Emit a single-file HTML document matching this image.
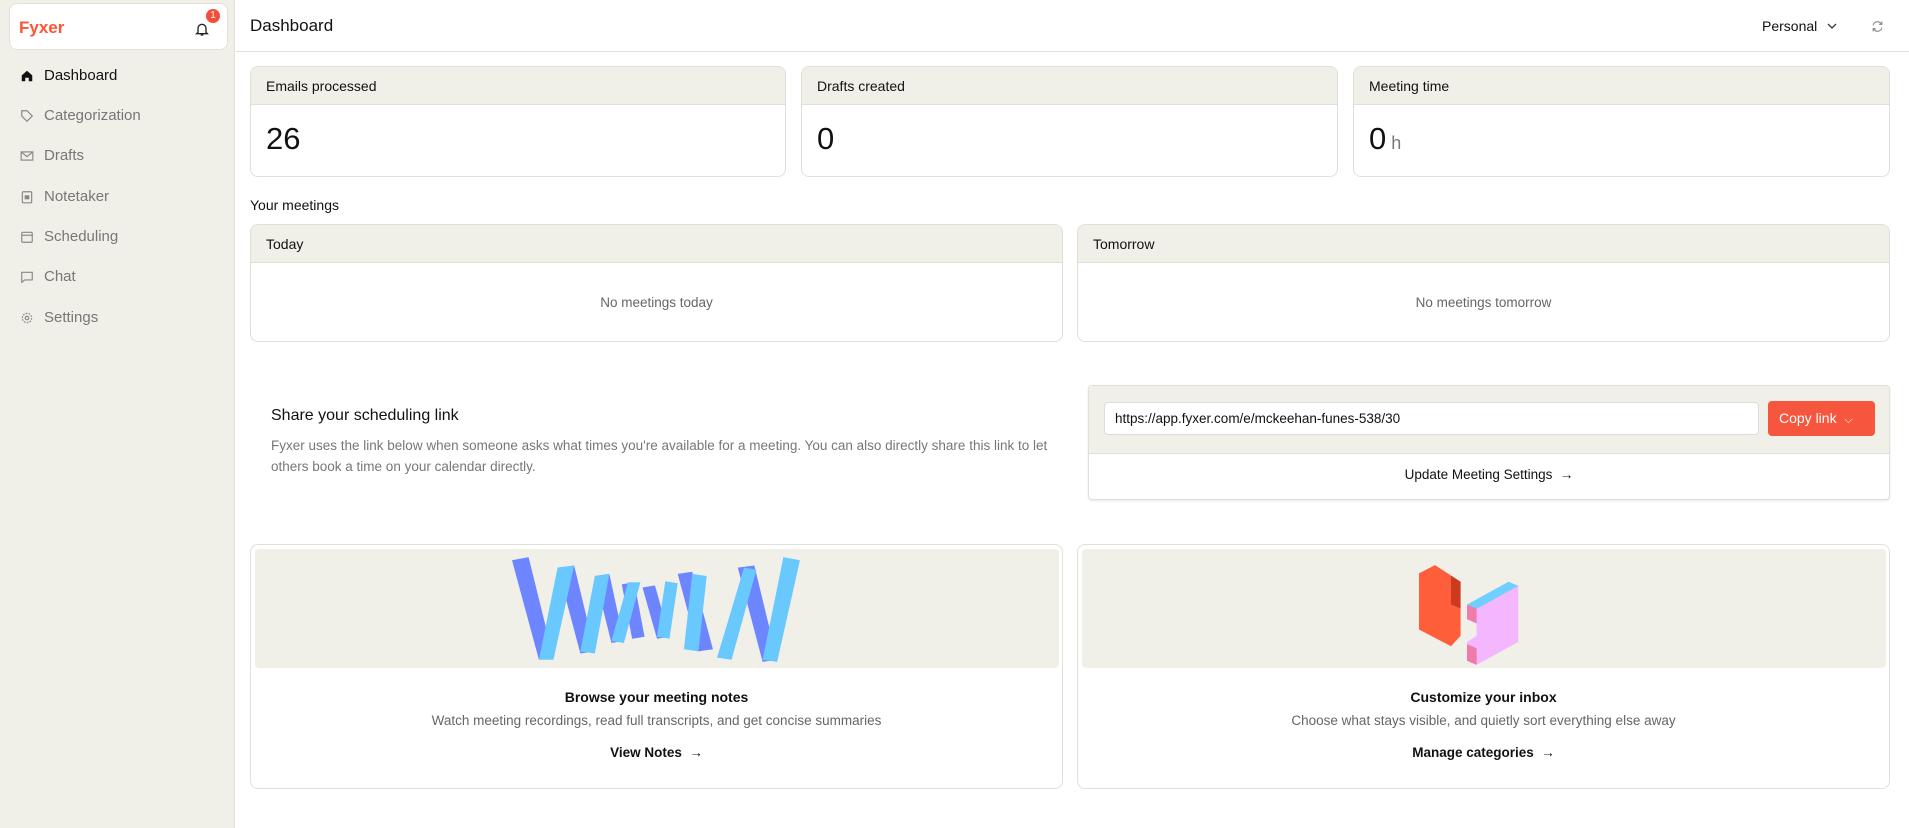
<!DOCTYPE html>
<html><head><meta charset="utf-8"><style>
*{box-sizing:border-box;margin:0;padding:0}
body{width:1909px;height:828px;overflow:hidden;background:#fff;font-family:"Liberation Sans",sans-serif;color:#111;position:relative}
.abs{position:absolute}
.side{left:0;top:0;width:235px;height:828px;background:#f0f0e8;border-right:1px solid #e2e2da}
.logo{left:9px;top:3px;width:219px;height:47px;background:#fff;border:1px solid #e2e2da;border-radius:8px}
.nav{left:20px;font-size:15px;color:#777;display:flex;align-items:center;gap:10px}
.nav svg{width:14px;height:14px}
.card{border:1px solid #e0e0d8;border-radius:8px;overflow:hidden;background:#fff}
.ch{height:38px;background:#f0f0e8;border-bottom:1px solid #e0e0d8;padding:0 15px;line-height:38px;font-size:14px;color:#111}
.num{font-size:31px;padding:16px 15px}
.empty{text-align:center;font-size:13.5px;color:#666;line-height:80px}
.t{font-size:14px;text-align:center}
</style></head><body>
<div class="abs side"></div>
<div class="abs logo"><span class="abs" style="left:9px;top:14px;font-weight:bold;color:#ff5533;font-size:17px">Fyxer</span>
<svg class="abs" style="left:184px;top:17px" width="16" height="16" viewBox="0 0 24 24" fill="none" stroke="#222" stroke-width="2"><path d="M6 17V11a6 6 0 0112 0v6l2 2H4zM10 21h4"/></svg>
<div class="abs" style="left:196px;top:5px;width:14px;height:14px;border-radius:50%;background:#f24e3a;color:#fff;font-size:10px;text-align:center;line-height:14px">1</div></div>
<div class="abs nav" style="top:67px;color:#111"><svg viewBox="0 0 24 24"><path d="M3 11L12 3l9 8v10h-6v-6H9v6H3z" fill="#111"/></svg>Dashboard</div>
<div class="abs nav" style="top:107px"><svg viewBox="0 0 24 24" fill="none" stroke="#888" stroke-width="2"><path d="M3 3h9l9 9-9 9-9-9z"/></svg>Categorization</div>
<div class="abs nav" style="top:147px"><svg viewBox="0 0 24 24" fill="none" stroke="#888" stroke-width="2"><rect x="2" y="5" width="20" height="14"/><path d="M2 5l10 8 10-8"/></svg>Drafts</div>
<div class="abs nav" style="top:188px"><svg viewBox="0 0 24 24" fill="none" stroke="#888" stroke-width="2"><rect x="4" y="3" width="16" height="19" rx="2"/><rect x="9" y="10" width="6" height="5" fill="#888"/></svg>Notetaker</div>
<div class="abs nav" style="top:228px"><svg viewBox="0 0 24 24" fill="none" stroke="#888" stroke-width="2"><rect x="3" y="4" width="18" height="17" rx="2"/><path d="M3 9h18"/></svg>Scheduling</div>
<div class="abs nav" style="top:268px"><svg viewBox="0 0 24 24" fill="none" stroke="#888" stroke-width="2"><path d="M3 4h18v13H8l-5 4z"/></svg>Chat</div>
<div class="abs nav" style="top:309px"><svg viewBox="0 0 24 24" fill="none" stroke="#888" stroke-width="2"><circle cx="12" cy="12" r="3"/><circle cx="12" cy="12" r="8" stroke-dasharray="3 2"/></svg>Settings</div>

<div class="abs" style="left:236px;top:0;width:1673px;height:52px;border-bottom:1px solid #e2e2da"></div>
<div class="abs" style="left:250px;top:16px;font-size:17px">Dashboard</div>
<div class="abs" style="left:1762px;top:18px;font-size:14px">Personal</div>
<svg class="abs" style="left:1826px;top:20px" width="12" height="12" viewBox="0 0 24 24" fill="none" stroke="#333" stroke-width="2.5"><path d="M4 8l8 8 8-8"/></svg>
<svg class="abs" style="left:1871px;top:20px" width="13" height="13" viewBox="0 0 24 24" fill="none" stroke="#888" stroke-width="2"><path d="M4 10a8 8 0 0114-4l2 2M20 14a8 8 0 01-14 4l-2-2M20 3v5h-5M4 21v-5h5"/></svg>

<div class="abs card" style="left:250px;top:66px;width:536px;height:111px"><div class="ch">Emails processed</div><div class="num">26</div></div>
<div class="abs card" style="left:801px;top:66px;width:537px;height:111px"><div class="ch">Drafts created</div><div class="num">0</div></div>
<div class="abs card" style="left:1353px;top:66px;width:537px;height:111px"><div class="ch">Meeting time</div><div class="num">0<span style="font-size:18px;color:#777"> h</span></div></div>

<div class="abs" style="left:250px;top:197px;font-size:14px">Your meetings</div>
<div class="abs card" style="left:250px;top:224px;width:813px;height:118px"><div class="ch">Today</div><div class="empty">No meetings today</div></div>
<div class="abs card" style="left:1077px;top:224px;width:813px;height:118px"><div class="ch">Tomorrow</div><div class="empty">No meetings tomorrow</div></div>

<div class="abs" style="left:271px;top:407px;font-size:16px">Share your scheduling link</div>
<div class="abs" style="left:271px;top:435px;width:780px;font-size:13.5px;color:#777;line-height:21px">Fyxer uses the link below when someone asks what times you're available for a meeting. You can also directly share this link to let others book a time on your calendar directly.</div>
<div class="abs card" style="left:1088px;top:385px;width:802px;height:115px;border-radius:4px;box-shadow:0 1px 2px rgba(0,0,0,.1)">
<div style="height:68px;background:#f0f0e8;border-bottom:1px solid #e0e0d8"></div>
<div class="t" style="position:absolute;left:0;right:0;top:81px;font-size:13.5px">Update Meeting Settings &nbsp;→</div></div>
<div class="abs" style="left:1104px;top:402px;width:655px;height:33px;background:#fff;border:1px solid #ddd;border-radius:4px;font-size:13.5px;line-height:31px;padding-left:10px">https://app.fyxer.com/e/mckeehan-funes-538/30</div>
<div class="abs" style="left:1768px;top:401px;width:107px;height:35px;background:#f6563d;border-radius:4px;color:#fff;font-size:14px;line-height:35px;padding-left:11px">Copy link &nbsp;<span style="font-size:11px">⌵</span></div>

<div class="abs card" style="left:250px;top:544px;width:813px;height:245px">
<div class="abs" style="left:4px;top:4px;width:804px;height:119px;background:#f0f0e8;border-radius:4px">
<svg class="abs" style="left:257px;top:6px" width="290" height="110" viewBox="0 0 140 105" preserveAspectRatio="none">
<g fill="#6d86ff"><polygon points="0,5 8,2 20,98 13,100"/><polygon points="22,12 30,10 40,92 33,94"/><polygon points="40,20 47,18 54,82 48,84"/><polygon points="53,28 59,26 64,78 58,80"/><polygon points="63,31 69,29 76,78 70,80"/><polygon points="80,18 87,16 97,90 90,92"/><polygon points="109,12 117,10 128,100 121,102"/></g>
<g fill="#69c9ff"><polygon points="22,12 30,10 20,100 13,100"/><polygon points="40,20 47,18 40,94 33,92"/><polygon points="56,26 62,26 54,84 48,82"/><polygon points="74,25 80,27 76,80 70,78"/><polygon points="87,18 94,20 90,92 83,90"/><polygon points="112,12 118,14 106,100 99,98"/><polygon points="131,2 139,5 128,102 121,100"/></g></svg></div>
<div class="abs t" style="left:0;right:0;top:144px;font-weight:bold">Browse your meeting notes</div>
<div class="abs t" style="left:0;right:0;top:168px;color:#666;font-size:13.5px">Watch meeting recordings, read full transcripts, and get concise summaries</div>
<div class="abs t" style="left:0;right:0;top:200px;font-weight:bold;font-size:13.5px">View Notes &nbsp;→</div></div>

<div class="abs card" style="left:1077px;top:544px;width:813px;height:245px">
<div class="abs" style="left:4px;top:4px;width:804px;height:119px;background:#f0f0e8;border-radius:4px">
<svg class="abs" style="left:337px;top:14px" width="128" height="104" viewBox="0 0 80 100" preserveAspectRatio="none">
<polygon points="0,10 10,2 20,12 20,40 26,44 26,70 20,80 10,72 0,64" fill="#ff5e3a"/>
<polygon points="20,12 26,18 26,44 20,40" fill="#cc3a20"/>
<polygon points="30,40 56,18 62,22 62,76 36,98 30,94 30,76 36,70 36,58 30,54" fill="#f3b6ff"/>
<polygon points="30,40 56,18 62,22 36,44" fill="#6dd0ff"/>
<polygon points="30,40 36,44 36,58 30,54" fill="#f07aa8"/><polygon points="30,78 36,82 36,98 30,94" fill="#f07aa8"/></svg></div>
<div class="abs t" style="left:0;right:0;top:144px;font-weight:bold">Customize your inbox</div>
<div class="abs t" style="left:0;right:0;top:168px;color:#666;font-size:13.5px">Choose what stays visible, and quietly sort everything else away</div>
<div class="abs t" style="left:0;right:0;top:200px;font-weight:bold;font-size:13.5px">Manage categories &nbsp;→</div></div>
</body></html>
